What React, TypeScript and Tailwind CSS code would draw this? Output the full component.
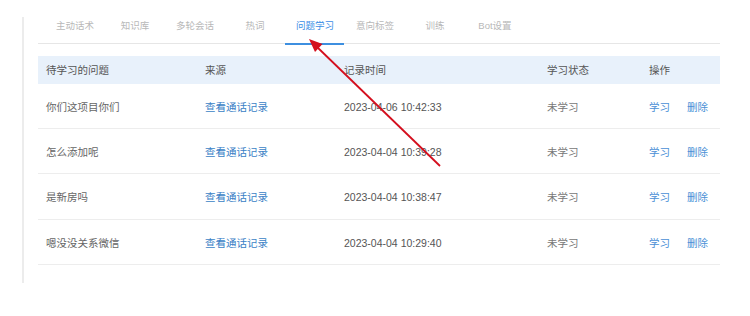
import React from "react";

const tabs = ["主动话术", "知识库", "多轮会话", "热词", "问题学习", "意向标签", "训练", "Bot设置"];

const rows = [
  { q: "你们这项目你们", t: "2023-04-06 10:42:33", h: "h-[45px]" },
  { q: "怎么添加呢", t: "2023-04-04 10:39:28", h: "h-[45px]" },
  { q: "是新房吗", t: "2023-04-04 10:38:47", h: "h-[46px]" },
  { q: "嗯没没关系微信", t: "2023-04-04 10:29:40", h: "h-[45px]" },
];

export default function App() {
  return (
    <div
      className="relative w-[750px] h-[316px] bg-white overflow-hidden"
      style={{ fontFamily: '"Liberation Sans", "Noto Sans CJK SC", sans-serif' }}
    >
      <div className="pl-[22px] pt-[17px]">
        <div className="border-l-2 border-[#ececec] h-[266px] pl-[14px] w-[700px]">
          {/* tabs */}
          <div className="flex border-b border-[#e6e6e6] h-[27px] w-[682px] pl-[7px]">
            {tabs.map((t) => {
              const active = t === "问题学习";
              return (
                <div
                  key={t}
                  className={
                    "relative w-[60px] flex justify-center pt-[2px] text-[9.5px] leading-[14px] " +
                    (active ? "text-[#3a8ee6]" : "text-[#b8b8b8]")
                  }
                >
                  {t}
                  {active && (
                    <div className="absolute left-0 bottom-[-2px] w-[59px] h-[2px] bg-[#3d8fe0]" />
                  )}
                </div>
              );
            })}
          </div>
          {/* table */}
          <div className="mt-[12px] w-[682px] text-[10.5px]">
            <div className="flex items-center h-[28px] pt-[2px] bg-[#e8f1fb] text-[#555]">
              <div className="w-[159px] pl-[8px]">待学习的问题</div>
              <div className="w-[139px] pl-[8px]">来源</div>
              <div className="w-[203px] pl-[8px]">记录时间</div>
              <div className="w-[102px] pl-[8px]">学习状态</div>
              <div className="w-[79px] pl-[8px]">操作</div>
            </div>
            {rows.map((r) => (
              <div key={r.t} className={"flex items-center pt-[3px] border-b border-[#ededed] " + r.h}>
                <div className="w-[159px] pl-[8px] text-[#666]">{r.q}</div>
                <div className="w-[139px] pl-[8px] text-[#3a7fc6]">查看通话记录</div>
                <div className="w-[203px] pl-[8px] text-[#555]">{r.t}</div>
                <div className="w-[102px] pl-[8px] text-[#777]">未学习</div>
                <div className="w-[79px] pl-[8px] flex gap-[17px] text-[#4a8fd6]">
                  <span>学习</span>
                  <span>删除</span>
                </div>
              </div>
            ))}
          </div>
        </div>
      </div>
      {/* red arrow annotation */}
      <svg className="absolute left-0 top-0 pointer-events-none" width="750" height="316">
        <line x1="440" y1="166" x2="316" y2="46" stroke="#d40f1e" strokeWidth="1.8" />
        <polygon points="309,39 322.5,44 315,52" fill="#d40f1e" />
      </svg>
    </div>
  );
}
